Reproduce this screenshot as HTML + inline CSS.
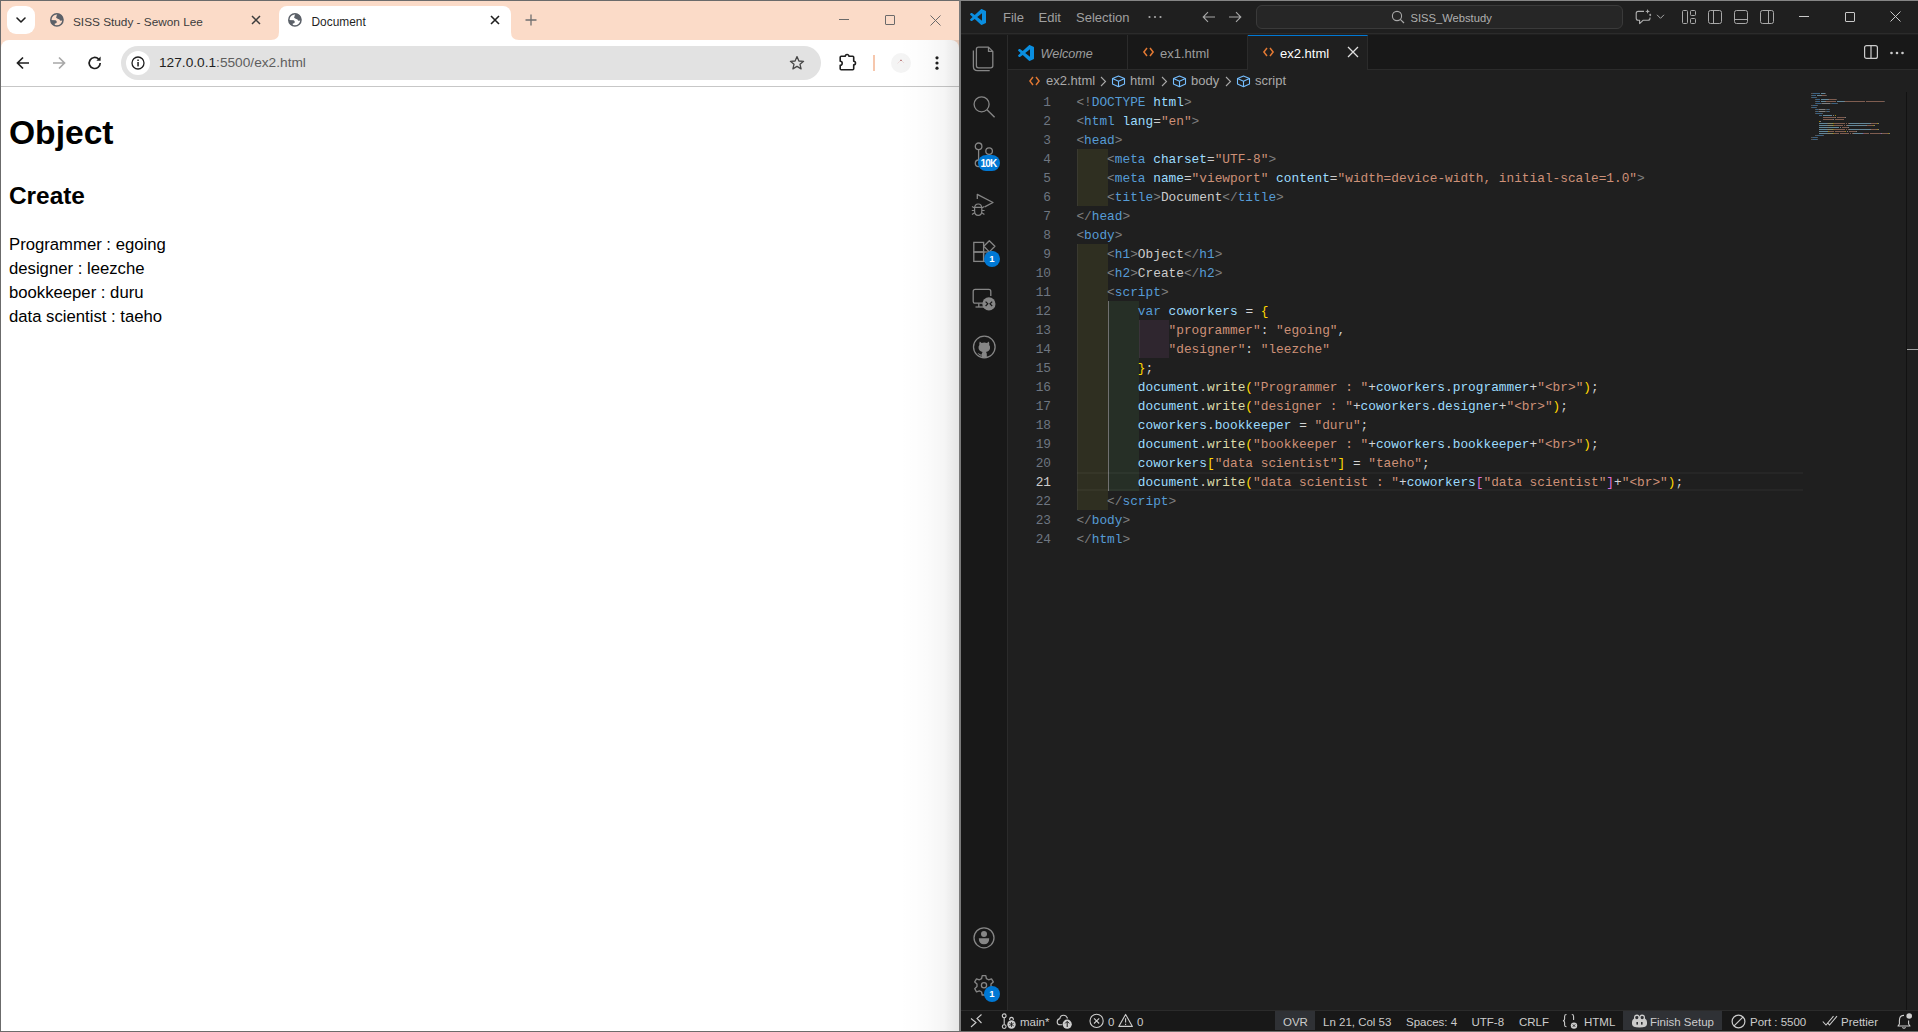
<!DOCTYPE html>
<html><head><meta charset="utf-8">
<style>
*{box-sizing:border-box;margin:0;padding:0}
html,body{width:1918px;height:1032px;overflow:hidden;background:#1f1f1f;font-family:"Liberation Sans",sans-serif}
.abs{position:absolute}
svg{position:absolute;overflow:visible}
/* ---------- browser ---------- */
#br{position:absolute;left:0;top:0;width:960px;height:1032px;background:#fff;overflow:hidden}
#frame{position:absolute;left:0;top:0;width:960px;height:48px;background:#fbdbc8}
.tabtxt{position:absolute;font-size:12px;color:#1f1f1f;white-space:nowrap;line-height:14px}
#toolbar{position:absolute;left:1px;top:40px;width:958px;height:47px;background:#fff;border-radius:8px 8px 0 0;border-bottom:1px solid #c7c7c7}
#omni{position:absolute;left:121px;top:46px;width:700px;height:34px;border-radius:17px;background:#e2e2e2}
#page{position:absolute;left:1px;top:87px;width:958px;height:944px;background:#fff}
.pg{position:absolute;white-space:nowrap;color:#000}
/* ---------- vscode ---------- */
#vs{position:absolute;left:960px;top:0;width:958px;height:1032px;background:#1f1f1f;overflow:hidden}
.ui{position:absolute;white-space:nowrap;color:#cccccc;font-size:13px;line-height:16px}
.code{position:absolute;left:116.4px;padding-top:1px;white-space:pre;font-family:"Liberation Mono",monospace;font-size:12.8167px;line-height:19px;height:19px;color:#cccccc}
.ln{position:absolute;left:41px;padding-top:1px;width:50px;text-align:right;font-family:"Liberation Mono",monospace;font-size:12.8167px;line-height:19px;color:#6e7681}
.p{color:#808080}.t{color:#569cd6}.a{color:#9cdcfe}.s{color:#ce9178}.x{color:#cccccc}
.v{color:#9cdcfe}.k{color:#569cd6}.f{color:#dcdcaa}.b1{color:#ffd700}.b2{color:#da70d6}.o{color:#d4d4d4}
.sb{position:absolute;top:1011px;font-size:12px;line-height:20px;color:#cccccc;white-space:nowrap}
</style></head><body>
<div id="br">
  <div id="frame"></div>
  <!-- window border -->
  <div class="abs" style="left:0;top:0;width:960px;height:1px;background:#6b6b6b;z-index:5"></div>
  <div class="abs" style="left:0;top:0;width:1px;height:1032px;background:#6b6b6b;z-index:5"></div>
  <div class="abs" style="left:959px;top:0;width:1px;height:1032px;background:#7a7a7a;z-index:5"></div>
  <div class="abs" style="left:0;top:1031px;width:960px;height:1px;background:#6b6b6b;z-index:5"></div>
  <!-- tab dropdown -->
  <div class="abs" style="left:7px;top:6px;width:28px;height:28px;border-radius:9px;background:#fff"></div>
  <svg style="left:0;top:0" width="40" height="40"><path d="M17 18 L21 22 L25 18" fill="none" stroke="#1f1f1f" stroke-width="1.6" stroke-linecap="round" stroke-linejoin="round"/></svg>
  <!-- inactive tab -->
  <svg style="left:47px;top:10px" width="20" height="20"><defs><clipPath id="gc1"><circle cx="9.9" cy="9.9" r="6.3"/></clipPath></defs><circle cx="9.9" cy="9.9" r="6.1" fill="none" stroke="#5b6068" stroke-width="1.5"/><g clip-path="url(#gc1)" fill="#5b6068"><path d="M11.2 3 Q9 5.4 9.1 7.8 Q10.6 9.2 12.5 9.4 Q13 10.6 13.6 10.8 L17 10.2 L17 3 Z"/><path d="M2.6 10.1 L8.6 10.2 Q9.9 10.8 9.8 12.2 Q9.3 13.3 7.8 13.6 L7.5 17 L2.6 17 Z"/></g></svg>
  <div class="tabtxt" style="left:73px;top:14.5px;color:#3c3c3c;font-size:11.8px">SISS Study - Sewon Lee</div>
  <svg style="left:250px;top:14px" width="12" height="12"><path d="M2 2 L10 10 M10 2 L2 10" stroke="#3c3c3c" stroke-width="1.5"/></svg>
  <!-- active tab -->
  <div class="abs" style="left:279px;top:6px;width:232px;height:35px;background:#fff;border-radius:8px 8px 0 0"></div>
  <svg style="left:271px;top:32px" width="8" height="9"><path d="M0 8 Q8 8 8 0 L8 9 L0 9 Z" fill="#fff"/></svg>
  <svg style="left:511px;top:32px" width="8" height="9"><path d="M8 8 Q0 8 0 0 L0 9 L8 9 Z" fill="#fff"/></svg>
  <svg style="left:285px;top:10px" width="20" height="20"><defs><clipPath id="gc2"><circle cx="9.9" cy="9.9" r="6.3"/></clipPath></defs><circle cx="9.9" cy="9.9" r="6.1" fill="none" stroke="#5b6068" stroke-width="1.5"/><g clip-path="url(#gc2)" fill="#5b6068"><path d="M11.2 3 Q9 5.4 9.1 7.8 Q10.6 9.2 12.5 9.4 Q13 10.6 13.6 10.8 L17 10.2 L17 3 Z"/><path d="M2.6 10.1 L8.6 10.2 Q9.9 10.8 9.8 12.2 Q9.3 13.3 7.8 13.6 L7.5 17 L2.6 17 Z"/></g></svg>
  <div class="tabtxt" style="left:311.5px;top:14.5px;color:#1f1f1f;font-size:11.9px">Document</div>
  <svg style="left:489px;top:14px" width="12" height="12"><path d="M2 2 L10 10 M10 2 L2 10" stroke="#1f1f1f" stroke-width="1.6"/></svg>
  <!-- new tab -->
  <svg style="left:524px;top:13px" width="14" height="14"><path d="M7 1.5 V12.5 M1.5 7 H12.5" stroke="#6f6f6f" stroke-width="1.3"/></svg>
  <!-- window controls -->
  <div class="abs" style="left:839px;top:19px;width:10px;height:1px;background:#6a6a6a"></div>
  <div class="abs" style="left:885px;top:15px;width:10px;height:10px;border:1px solid #6a6a6a;border-radius:1px"></div>
  <svg style="left:930px;top:15px" width="11" height="11"><path d="M0.5 0.5 L10.5 10.5 M10.5 0.5 L0.5 10.5" stroke="#6a6a6a" stroke-width="1"/></svg>
  <!-- toolbar -->
  <div id="toolbar"></div>
  <svg style="left:15px;top:55px" width="16" height="16"><path d="M14 8 H2.5 M8 2.5 L2.5 8 L8 13.5" fill="none" stroke="#1f1f1f" stroke-width="1.7"/></svg>
  <svg style="left:51px;top:55px" width="16" height="16"><path d="M2 8 H13.5 M8 2.5 L13.5 8 L8 13.5" fill="none" stroke="#a8a8a8" stroke-width="1.7"/></svg>
  <svg style="left:87px;top:55px" width="16" height="16"><path d="M13.2 8 A5.5 5.5 0 1 1 11.6 4.1" fill="none" stroke="#1f1f1f" stroke-width="1.7"/><path d="M13.6 1.6 V5.8 H9.4 Z" fill="#1f1f1f"/></svg>
  <div id="omni"></div>
  <div class="abs" style="left:126px;top:51px;width:24px;height:24px;border-radius:12px;background:#fff"></div>
  <svg style="left:131px;top:56px" width="14" height="14"><circle cx="7" cy="7" r="6" fill="none" stroke="#1f1f1f" stroke-width="1.3"/><rect x="6.3" y="6" width="1.5" height="4.4" fill="#1f1f1f"/><rect x="6.3" y="3.5" width="1.5" height="1.5" fill="#1f1f1f"/></svg>
  <div class="abs" style="left:159px;top:55px;font-size:13.7px;line-height:16px;white-space:nowrap"><span style="color:#1f1f1f">127.0.0.1</span><span style="color:#5e5e5e">:5500/ex2.html</span></div>
  <svg style="left:789px;top:55px" width="16" height="16"><path d="M8 1.6 L9.9 6 L14.6 6.3 L11 9.3 L12.1 13.9 L8 11.4 L3.9 13.9 L5 9.3 L1.4 6.3 L6.1 6 Z" fill="none" stroke="#474747" stroke-width="1.3" stroke-linejoin="round"/></svg>
  <svg style="left:838px;top:52px" width="20" height="20"><path d="M2.2 5.3 Q2.2 4.3 3.2 4.3 H7.3 A1.8 1.8 0 0 1 10.9 4.3 H14.7 Q15.7 4.3 15.7 5.3 V9.2 A1.8 1.8 0 0 1 15.7 12.8 V16.7 Q15.7 17.7 14.7 17.7 H3.2 Q2.2 17.7 2.2 16.7 V13.2 A2 2 0 0 0 2.2 9.2 Z" fill="none" stroke="#1f1f1f" stroke-width="1.6" stroke-linejoin="round"/></svg>
  <div class="abs" style="left:873px;top:55px;width:2px;height:16px;background:#f6c7ad"></div>
  <div class="abs" style="left:891px;top:53px;width:20px;height:20px;border-radius:10px;background:#f4f4f4"></div>
  <svg style="left:893px;top:55px" width="16" height="12"><path d="M4.5 8.5 L8 5 L11 8" fill="none" stroke="#e8d0d0" stroke-width="0.7"/><path d="M8 4.2 L8.8 6 H7.2 Z" fill="#a04848"/></svg>
  <svg style="left:933px;top:55px" width="8" height="16"><circle cx="4" cy="2.8" r="1.6" fill="#1f1f1f"/><circle cx="4" cy="8" r="1.6" fill="#1f1f1f"/><circle cx="4" cy="13.2" r="1.6" fill="#1f1f1f"/></svg>
  <!-- page -->
  <div id="page">
    <div class="pg" style="left:8px;top:26px;font-size:33.6px;font-weight:700;line-height:40px">Object</div>
    <div class="pg" style="left:8px;top:94px;font-size:24.4px;font-weight:700;line-height:30px">Create</div>
    <div class="pg" style="left:8px;top:145.5px;font-size:16.7px;line-height:24px">Programmer : egoing<br>designer : leezche<br>bookkeeper : duru<br>data scientist : taeho</div>
  </div>
  <div class="abs" style="left:900px;top:40px;width:59px;height:992px;background:linear-gradient(to right,rgba(0,0,0,0) 0%,rgba(0,0,0,0.015) 45%,rgba(0,0,0,0.04) 75%,rgba(0,0,0,0.1) 100%);z-index:4"></div>
</div>
<div id="vs">
  <!-- borders -->
  <div class="abs" style="left:0;top:0;width:1px;height:1032px;background:#7a7a7a;z-index:5"></div>
  <div class="abs" style="left:0;top:0;width:958px;height:1px;background:#858585;z-index:5"></div>
  <div class="abs" style="left:0;top:1031px;width:958px;height:1px;background:#6b6b6b;z-index:5"></div>
  <!-- title bar -->
  <div class="abs" style="left:1px;top:1px;width:957px;height:33px;background:#1f1f1f;border-bottom:1px solid #2b2b2b"></div>
  <svg style="left:10px;top:9px" width="16" height="16" viewBox="0 0 100 100"><path d="M96.5 10.8 L75.9 0.9 C73.5 -0.2 70.7 0.3 68.9 2.1 L29.5 38.1 L12.3 25.1 C10.7 23.9 8.5 24 7 25.3 L1.5 30.3 C-0.3 32 -0.3 34.8 1.5 36.5 L16.4 50 L1.5 63.5 C-0.3 65.2 -0.3 68 1.5 69.7 L7 74.7 C8.5 76 10.7 76.1 12.3 74.9 L29.5 61.9 L68.9 97.9 C70.7 99.7 73.5 100.2 75.9 99.1 L96.5 89.2 C98.7 88.2 100 86 100 83.6 V16.4 C100 14 98.7 11.8 96.5 10.8 Z M75 72.7 L45.1 50 L75 27.3 Z" fill="#0a8ee0"/></svg>
  <div class="ui" style="left:43px;top:9.5px;color:#a0a0a0">File</div>
  <div class="ui" style="left:78.5px;top:9.5px;color:#a0a0a0">Edit</div>
  <div class="ui" style="left:116px;top:9.5px;color:#a0a0a0">Selection</div>
  <svg style="left:187px;top:15px" width="16" height="4"><circle cx="2.5" cy="2" r="1.1" fill="#a8a8a8"/><circle cx="8" cy="2" r="1.1" fill="#a8a8a8"/><circle cx="13.5" cy="2" r="1.1" fill="#a8a8a8"/></svg>
  <svg style="left:241px;top:10px" width="16" height="14"><path d="M14 7 H2.5 M7 2.2 L2.2 7 L7 11.8" fill="none" stroke="#a8a8a8" stroke-width="1.1"/></svg>
  <svg style="left:267px;top:10px" width="16" height="14"><path d="M2 7 H13.5 M9 2.2 L13.8 7 L9 11.8" fill="none" stroke="#a8a8a8" stroke-width="1.1"/></svg>
  <div class="abs" style="left:296px;top:5px;width:367px;height:24px;border-radius:6px;background:#262626;border:1px solid #3a3a3a"></div>
  <svg style="left:431px;top:10px" width="14" height="14"><circle cx="6" cy="6" r="4.6" fill="none" stroke="#a8a8a8" stroke-width="1.1"/><path d="M9.3 9.3 L13 13" stroke="#a8a8a8" stroke-width="1.2"/></svg>
  <div class="ui" style="left:450.5px;top:9.5px;font-size:11.2px;color:#b0b0b0">SISS_Webstudy</div>
  <svg style="left:675px;top:9px" width="18" height="16"><path d="M9 2.4 H3.2 Q1.2 2.4 1.2 4.4 V9.3 Q1.2 11.3 3.2 11.3 H4.6 V14.6 L8 11.3 H13 Q15 11.3 15 9.3 V8.6" fill="none" stroke="#b0b0b0" stroke-width="1.1" stroke-linejoin="round"/><path d="M12.6 0 L13.3 1.7 L15 2.4 L13.3 3.1 L12.6 4.8 L11.9 3.1 L10.2 2.4 L11.9 1.7 Z" fill="#b0b0b0"/><path d="M15.2 4.5 L16.3 5.9 L15.2 7.3 L14.1 5.9 Z" fill="#b0b0b0"/></svg>
  <svg style="left:696px;top:14px" width="9" height="6"><path d="M1 0.8 L4.5 4.3 L8 0.8" fill="none" stroke="#a8a8a8" stroke-width="1"/></svg>
  <svg style="left:722px;top:10px" width="14" height="14"><rect x="0.5" y="0.5" width="5" height="13" rx="1" fill="none" stroke="#a8a8a8" stroke-width="1"/><rect x="8.5" y="0.5" width="5" height="5" rx="1" fill="none" stroke="#a8a8a8" stroke-width="1"/><rect x="8.5" y="8.5" width="5" height="5" rx="1" fill="none" stroke="#a8a8a8" stroke-width="1"/></svg>
  <svg style="left:748px;top:10px" width="14" height="14"><rect x="0.5" y="0.5" width="13" height="13" rx="2" fill="none" stroke="#a8a8a8" stroke-width="1"/><path d="M5.5 0.5 V13.5" stroke="#a8a8a8" stroke-width="1"/></svg>
  <svg style="left:774px;top:10px" width="14" height="14"><rect x="0.5" y="0.5" width="13" height="13" rx="2" fill="none" stroke="#a8a8a8" stroke-width="1"/><path d="M0.5 9.5 H13.5" stroke="#a8a8a8" stroke-width="1"/></svg>
  <svg style="left:800px;top:10px" width="14" height="14"><rect x="0.5" y="0.5" width="13" height="13" rx="2" fill="none" stroke="#a8a8a8" stroke-width="1"/><path d="M8.5 0.5 V13.5" stroke="#a8a8a8" stroke-width="1"/></svg>
  <div class="abs" style="left:839px;top:16px;width:10px;height:1px;background:#c8c8c8"></div>
  <div class="abs" style="left:885px;top:12px;width:10px;height:10px;border:1px solid #c8c8c8;border-radius:1px"></div>
  <svg style="left:930px;top:11px" width="11" height="11"><path d="M0.5 0.5 L10.5 10.5 M10.5 0.5 L0.5 10.5" stroke="#c8c8c8" stroke-width="1"/></svg>
  <!-- activity bar -->
  <div class="abs" style="left:1px;top:35px;width:47px;height:975px;background:#181818;border-right:1px solid #2b2b2b"></div>
  <!-- status bar -->
  <div class="abs" style="left:1px;top:1010px;width:957px;height:21px;background:#181818;border-top:1px solid #2b2b2b"></div>
  <!-- tabs bar -->
  <div class="abs" style="left:48px;top:35px;width:910px;height:35px;background:#181818;border-bottom:1px solid #2b2b2b"></div>
  <div class="abs" style="left:48px;top:35px;width:120px;height:34px;border-right:1px solid #2b2b2b"></div>
  <div class="abs" style="left:168px;top:35px;width:120px;height:34px;border-right:1px solid #2b2b2b"></div>
  <div class="abs" style="left:288px;top:35px;width:120px;height:35px;background:#1f1f1f;border-right:1px solid #2b2b2b;border-top:1px solid #0078d4"></div>
  <!-- editor area -->
  <div class="abs" style="left:48px;top:70px;width:910px;height:940px;background:#1f1f1f"></div>


  <!-- activity icons -->
  <svg style="left:12px;top:46px" width="24" height="26"><path d="M16.5 1.1 H6.5 Q4.4 1.1 4.4 3.2 V19.8 Q4.4 21.9 6.5 21.9 H18.6 Q20.8 21.9 20.8 19.8 V5.4 Z M16.5 1.1 V5.4 H20.8" fill="none" stroke="#868686" stroke-width="1.3" stroke-linejoin="round"/><path d="M1.4 4.5 V20.5 Q1.4 24.6 5.5 24.6 H17.7" fill="none" stroke="#868686" stroke-width="1.3"/></svg>
  <svg style="left:12px;top:94px" width="24" height="26"><circle cx="9.6" cy="10.3" r="7.5" fill="none" stroke="#868686" stroke-width="1.3"/><path d="M15 15.8 L22.6 23.2" stroke="#868686" stroke-width="1.4"/></svg>
  <svg style="left:12px;top:141px" width="24" height="26"><circle cx="6.6" cy="5.3" r="3.3" fill="none" stroke="#868686" stroke-width="1.3"/><circle cx="17.1" cy="10.1" r="3.3" fill="none" stroke="#868686" stroke-width="1.3"/><circle cx="6.6" cy="22.3" r="3.3" fill="none" stroke="#868686" stroke-width="1.3"/><path d="M6.6 8.6 V19" stroke="#868686" stroke-width="1.3"/><path d="M17.1 13.4 Q17.1 17 12 18.5 L8.8 19.6" fill="none" stroke="#868686" stroke-width="1.3"/></svg>
  <div class="abs" style="left:18px;top:155px;width:22px;height:16px;border-radius:8px;background:#0078d4;color:#fff;font-size:10px;font-weight:700;line-height:17px;text-align:center;letter-spacing:-0.7px;text-indent:-1px">10K</div>
  <svg style="left:10px;top:191px" width="26" height="26"><path d="M7.3 8 V3.3 L23 11.5 L14.7 15.8" fill="none" stroke="#868686" stroke-width="1.3" stroke-linejoin="round"/><path d="M4.6 17.5 Q4.6 13 8.2 13 Q11.8 13 11.8 17.5 V20 Q11.8 24.4 8.2 24.4 Q4.6 24.4 4.6 20 Z M4.6 16.4 H11.8 M2 15.5 L4.6 17 M14.4 15.5 L11.8 17 M1.8 19.5 H4.6 M14.6 19.5 H11.8 M2 23.5 L4.6 21.8 M14.4 23.5 L11.8 21.8" fill="none" stroke="#868686" stroke-width="1.2"/></svg>
  <svg style="left:12px;top:240px" width="24" height="24"><rect x="1.8" y="2.4" width="9.8" height="9.6" fill="none" stroke="#868686" stroke-width="1.3"/><rect x="1.8" y="12" width="9.8" height="9.4" fill="none" stroke="#868686" stroke-width="1.3"/><rect x="11.6" y="12" width="9.4" height="9.4" fill="none" stroke="#868686" stroke-width="1.3"/><path d="M17.3 0.8 L22.9 6.3 L17.3 11.9 L11.8 6.3 Z" fill="none" stroke="#868686" stroke-width="1.3" stroke-linejoin="round"/></svg>
  <div class="abs" style="left:24px;top:251px;width:16px;height:16px;border-radius:8px;background:#0078d4;color:#fff;font-size:9.5px;font-weight:700;line-height:16px;text-align:center">1</div>
  <svg style="left:12px;top:287px" width="26" height="26"><path d="M13 16.2 H3.2 Q1.2 16.2 1.2 14.2 V4.4 Q1.2 2.4 3.2 2.4 H16.8 Q18.8 2.4 18.8 4.4 V9" fill="none" stroke="#868686" stroke-width="1.3"/><path d="M3.5 20 H13" stroke="#868686" stroke-width="1.3"/><path d="M6.8 16.2 V20" stroke="#868686" stroke-width="1.3"/><circle cx="16.9" cy="16.9" r="6.6" fill="#868686"/><path d="M13.6 14.6 L15.8 16.8 L13.6 19 M20.2 14.6 L18 16.8 L20.2 19" fill="none" stroke="#181818" stroke-width="1.2"/></svg>
  <svg style="left:12px;top:335px" width="24" height="24"><circle cx="12.3" cy="12" r="10.8" fill="none" stroke="#868686" stroke-width="1.3"/><path d="M7.8 6.5 L9.6 8 Q12.3 7.2 15 8 L16.8 6.5 Q17.6 8.5 17.2 10 Q18.4 11.4 18 13.6 Q17.4 16.6 14 17 Q14.8 17.8 14.8 19 V22.8 H9.8 V20.6 Q7.6 21 6.8 19.6 Q6.4 18.4 5.4 18 Q6.6 17.6 7.4 18.8 Q8.4 20 9.8 19.4 V19 Q9.8 17.8 10.6 17 Q7.2 16.6 6.6 13.6 Q6.2 11.4 7.4 10 Q7 8.5 7.8 6.5 Z" fill="#868686"/></svg>
  <svg style="left:12px;top:926px" width="24" height="24"><circle cx="12" cy="11.8" r="10" fill="none" stroke="#868686" stroke-width="1.3"/><circle cx="12" cy="7.9" r="3" fill="#868686"/><path d="M6.8 12.2 H17.2 Q17.2 18.2 12 18.2 Q6.8 18.2 6.8 12.2 Z" fill="#868686"/></svg>
  <svg style="left:12px;top:974px" width="24" height="24"><path d="M10.2 1.6 H13.8 L14.4 4.6 L16.6 5.8 L19.5 4.8 L21.3 7.9 L19 10 V12.6 L21.3 14.7 L19.5 17.8 L16.6 16.8 L14.4 18 L13.8 21 H10.2 L9.6 18 L7.4 16.8 L4.5 17.8 L2.7 14.7 L5 12.6 V10 L2.7 7.9 L4.5 4.8 L7.4 5.8 L9.6 4.6 Z" fill="none" stroke="#868686" stroke-width="1.3" stroke-linejoin="round"/><circle cx="12" cy="11.3" r="2.6" fill="none" stroke="#868686" stroke-width="1.3"/></svg>
  <div class="abs" style="left:24px;top:986px;width:16px;height:16px;border-radius:8px;background:#0078d4;color:#fff;font-size:9.5px;font-weight:700;line-height:16px;text-align:center">1</div>

  <!-- status items -->
  <div class="abs" style="left:315px;top:1011px;width:40px;height:19px;background:#2f3135"></div>
  <div class="abs" style="left:663px;top:1011px;width:99px;height:19px;background:#2f3135"></div>
  <svg style="left:10px;top:1013px" width="13" height="16"><path d="M1 5.5 L6 9.5 L1 14 M11.5 1.5 L7 5.5 L11.5 10" fill="none" stroke="#cccccc" stroke-width="1.1"/></svg>
  <svg style="left:40px;top:1013px" width="18" height="17"><circle cx="4.2" cy="2.8" r="1.9" fill="none" stroke="#cccccc" stroke-width="1.1"/><circle cx="4.2" cy="13.6" r="1.9" fill="none" stroke="#cccccc" stroke-width="1.1"/><path d="M4.2 4.7 V11.7" stroke="#cccccc" stroke-width="1.1"/><path d="M9.6 7 Q9.6 4.4 11.5 4.4 Q13.4 4.4 13.4 7" fill="none" stroke="#cccccc" stroke-width="1.1"/><circle cx="11.5" cy="11.5" r="4.2" fill="#cccccc"/><path d="M11.5 9 V14 M9.3 10.2 L13.7 12.8 M13.7 10.2 L9.3 12.8" stroke="#181818" stroke-width="0.8"/></svg>
  <div class="sb" style="left:60.0px;top:1011.7px;font-size:11.5px;color:#cccccc">main*</div>
  <svg style="left:96px;top:1013px" width="18" height="17"><path d="M11.5 5.5 Q10.5 2.2 7.5 2.2 Q4.3 2.2 3.8 5.6 Q1.2 6.2 1.2 9 Q1.2 11.8 4.2 11.8 H6" fill="none" stroke="#cccccc" stroke-width="1.1"/><circle cx="11.2" cy="11.2" r="4.6" fill="#cccccc"/><path d="M11.2 14 V8.6 M9.2 10.4 L11.2 8.4 L13.2 10.4" fill="none" stroke="#181818" stroke-width="1"/></svg>
  <svg style="left:129px;top:1013px" width="16" height="16"><circle cx="7.6" cy="7.9" r="6.6" fill="none" stroke="#cccccc" stroke-width="1.1"/><path d="M5 5.3 L10.2 10.5 M10.2 5.3 L5 10.5" stroke="#cccccc" stroke-width="1.1"/></svg>
  <div class="sb" style="left:148.0px;top:1011.7px;font-size:11.5px;color:#cccccc">0</div>
  <svg style="left:158px;top:1013px" width="16" height="15"><path d="M7.6 1.4 L14.4 13.4 H0.8 Z" fill="none" stroke="#cccccc" stroke-width="1.1" stroke-linejoin="round"/><path d="M7.6 5.2 V9.6 M7.6 10.8 V12" stroke="#cccccc" stroke-width="1.1"/></svg>
  <div class="sb" style="left:177.0px;top:1011.7px;font-size:11.5px;color:#cccccc">0</div>
  <div class="sb" style="left:323.0px;top:1011.7px;font-size:11.5px;color:#cccccc">OVR</div>
  <div class="sb" style="left:363.0px;top:1011.7px;font-size:11.5px;color:#cccccc">Ln 21, Col 53</div>
  <div class="sb" style="left:446.0px;top:1011.7px;font-size:11.5px;color:#cccccc">Spaces: 4</div>
  <div class="sb" style="left:511.5px;top:1011.7px;font-size:11.5px;color:#cccccc">UTF-8</div>
  <div class="sb" style="left:559.0px;top:1011.7px;font-size:11.5px;color:#cccccc">CRLF</div>
  <svg style="left:602px;top:1013px" width="18" height="17"><path d="M4.5 1.5 Q2.6 1.5 2.6 3.4 V6 Q2.6 7.6 1 7.8 Q2.6 8 2.6 9.6 V12 Q2.6 13.8 4.5 13.8" fill="none" stroke="#cccccc" stroke-width="1.1"/><path d="M9.8 1.5 Q11.6 1.5 11.6 3.4 V7" fill="none" stroke="#cccccc" stroke-width="1.1"/><circle cx="12" cy="12.6" r="3.2" fill="#cccccc"/><path d="M10.8 11.4 L13.2 13.8 M13.2 11.4 L10.8 13.8" stroke="#181818" stroke-width="0.9"/></svg>
  <div class="sb" style="left:624.0px;top:1011.7px;font-size:11.5px;color:#cccccc">HTML</div>
  <svg style="left:671px;top:1013px" width="17" height="16"><path d="M3 4.5 Q3 1.5 6 1.5 Q8.5 1.5 8.5 4 Q8.5 1.5 11 1.5 Q14 1.5 14 4.5 V5.5 Q16 6.5 16 9 V11 Q16 14.5 8.5 14.5 Q1 14.5 1 11 V9 Q1 6.5 3 5.5 Z" fill="#cccccc"/><path d="M4.2 4.4 Q4.2 3 6 3 Q7.4 3 7.4 4.4 Q7.4 6.2 5.8 6.2 Q4.2 6.2 4.2 4.4 Z M9.6 4.4 Q9.6 3 11 3 Q12.8 3 12.8 4.4 Q12.8 6.2 11.2 6.2 Q9.6 6.2 9.6 4.4 Z" fill="#2f3135"/><rect x="5.4" y="9" width="1.6" height="2.6" fill="#2f3135"/><rect x="10" y="9" width="1.6" height="2.6" fill="#2f3135"/></svg>
  <div class="sb" style="left:690.0px;top:1011.7px;font-size:11.5px;color:#cccccc">Finish Setup</div>
  <svg style="left:771px;top:1014px" width="15" height="15"><circle cx="7.5" cy="7.5" r="6.4" fill="none" stroke="#cccccc" stroke-width="1.2"/><path d="M3.1 11.9 L11.9 3.1" stroke="#cccccc" stroke-width="1.2"/></svg>
  <div class="sb" style="left:790.0px;top:1011.7px;font-size:11.5px;color:#cccccc">Port : 5500</div>
  <svg style="left:862px;top:1014px" width="16" height="14"><path d="M0.8 7.5 L4 11 L11.5 2.2 M5.8 9.2 L7.5 11 L15 2.2" fill="none" stroke="#cccccc" stroke-width="1.1"/></svg>
  <div class="sb" style="left:881.0px;top:1011.7px;font-size:11.5px;color:#cccccc">Prettier</div>
  <svg style="left:936px;top:1012px" width="18" height="18"><path d="M8 3.4 Q3.4 3.4 3.4 8.6 V12 L2 14 H14 L12.6 12 V8.6" fill="none" stroke="#cccccc" stroke-width="1.1" stroke-linejoin="round"/><path d="M6.4 15.4 Q8 17 9.6 15.4" fill="none" stroke="#cccccc" stroke-width="1.1"/><circle cx="13.2" cy="4" r="2.8" fill="#cccccc"/></svg>
  <!-- minimap -->
  <div class="abs" style="left:851px;top:92px;width:90px;height:50px;opacity:0.55">
<i style="position:absolute;left:0px;top:0.5px;width:2px;height:1.2px;background:#808080"></i>
<i style="position:absolute;left:2px;top:0.5px;width:7px;height:1.2px;background:#569cd6"></i>
<i style="position:absolute;left:10px;top:0.5px;width:4px;height:1.2px;background:#9cdcfe"></i>
<i style="position:absolute;left:14px;top:0.5px;width:1px;height:1.2px;background:#808080"></i>
<i style="position:absolute;left:0px;top:2.5px;width:1px;height:1.2px;background:#808080"></i>
<i style="position:absolute;left:1px;top:2.5px;width:4px;height:1.2px;background:#569cd6"></i>
<i style="position:absolute;left:6px;top:2.5px;width:4px;height:1.2px;background:#9cdcfe"></i>
<i style="position:absolute;left:10px;top:2.5px;width:1px;height:1.2px;background:#cccccc"></i>
<i style="position:absolute;left:11px;top:2.5px;width:4px;height:1.2px;background:#ce9178"></i>
<i style="position:absolute;left:15px;top:2.5px;width:1px;height:1.2px;background:#808080"></i>
<i style="position:absolute;left:0px;top:4.5px;width:1px;height:1.2px;background:#808080"></i>
<i style="position:absolute;left:1px;top:4.5px;width:4px;height:1.2px;background:#569cd6"></i>
<i style="position:absolute;left:5px;top:4.5px;width:1px;height:1.2px;background:#808080"></i>
<i style="position:absolute;left:4px;top:6.5px;width:1px;height:1.2px;background:#808080"></i>
<i style="position:absolute;left:5px;top:6.5px;width:4px;height:1.2px;background:#569cd6"></i>
<i style="position:absolute;left:10px;top:6.5px;width:7px;height:1.2px;background:#9cdcfe"></i>
<i style="position:absolute;left:17px;top:6.5px;width:1px;height:1.2px;background:#cccccc"></i>
<i style="position:absolute;left:18px;top:6.5px;width:7px;height:1.2px;background:#ce9178"></i>
<i style="position:absolute;left:25px;top:6.5px;width:1px;height:1.2px;background:#808080"></i>
<i style="position:absolute;left:4px;top:8.5px;width:1px;height:1.2px;background:#808080"></i>
<i style="position:absolute;left:5px;top:8.5px;width:4px;height:1.2px;background:#569cd6"></i>
<i style="position:absolute;left:10px;top:8.5px;width:4px;height:1.2px;background:#9cdcfe"></i>
<i style="position:absolute;left:14px;top:8.5px;width:1px;height:1.2px;background:#cccccc"></i>
<i style="position:absolute;left:15px;top:8.5px;width:10px;height:1.2px;background:#ce9178"></i>
<i style="position:absolute;left:26px;top:8.5px;width:7px;height:1.2px;background:#9cdcfe"></i>
<i style="position:absolute;left:33px;top:8.5px;width:1px;height:1.2px;background:#cccccc"></i>
<i style="position:absolute;left:34px;top:8.5px;width:20px;height:1.2px;background:#ce9178"></i>
<i style="position:absolute;left:55px;top:8.5px;width:18px;height:1.2px;background:#ce9178"></i>
<i style="position:absolute;left:73px;top:8.5px;width:1px;height:1.2px;background:#808080"></i>
<i style="position:absolute;left:4px;top:10.5px;width:1px;height:1.2px;background:#808080"></i>
<i style="position:absolute;left:5px;top:10.5px;width:5px;height:1.2px;background:#569cd6"></i>
<i style="position:absolute;left:10px;top:10.5px;width:1px;height:1.2px;background:#808080"></i>
<i style="position:absolute;left:11px;top:10.5px;width:8px;height:1.2px;background:#cccccc"></i>
<i style="position:absolute;left:19px;top:10.5px;width:2px;height:1.2px;background:#808080"></i>
<i style="position:absolute;left:21px;top:10.5px;width:5px;height:1.2px;background:#569cd6"></i>
<i style="position:absolute;left:26px;top:10.5px;width:1px;height:1.2px;background:#808080"></i>
<i style="position:absolute;left:0px;top:12.5px;width:2px;height:1.2px;background:#808080"></i>
<i style="position:absolute;left:2px;top:12.5px;width:4px;height:1.2px;background:#569cd6"></i>
<i style="position:absolute;left:6px;top:12.5px;width:1px;height:1.2px;background:#808080"></i>
<i style="position:absolute;left:0px;top:14.5px;width:1px;height:1.2px;background:#808080"></i>
<i style="position:absolute;left:1px;top:14.5px;width:4px;height:1.2px;background:#569cd6"></i>
<i style="position:absolute;left:5px;top:14.5px;width:1px;height:1.2px;background:#808080"></i>
<i style="position:absolute;left:4px;top:16.5px;width:1px;height:1.2px;background:#808080"></i>
<i style="position:absolute;left:5px;top:16.5px;width:2px;height:1.2px;background:#569cd6"></i>
<i style="position:absolute;left:7px;top:16.5px;width:1px;height:1.2px;background:#808080"></i>
<i style="position:absolute;left:8px;top:16.5px;width:6px;height:1.2px;background:#cccccc"></i>
<i style="position:absolute;left:14px;top:16.5px;width:2px;height:1.2px;background:#808080"></i>
<i style="position:absolute;left:16px;top:16.5px;width:2px;height:1.2px;background:#569cd6"></i>
<i style="position:absolute;left:18px;top:16.5px;width:1px;height:1.2px;background:#808080"></i>
<i style="position:absolute;left:4px;top:18.5px;width:1px;height:1.2px;background:#808080"></i>
<i style="position:absolute;left:5px;top:18.5px;width:2px;height:1.2px;background:#569cd6"></i>
<i style="position:absolute;left:7px;top:18.5px;width:1px;height:1.2px;background:#808080"></i>
<i style="position:absolute;left:8px;top:18.5px;width:6px;height:1.2px;background:#cccccc"></i>
<i style="position:absolute;left:14px;top:18.5px;width:2px;height:1.2px;background:#808080"></i>
<i style="position:absolute;left:16px;top:18.5px;width:2px;height:1.2px;background:#569cd6"></i>
<i style="position:absolute;left:18px;top:18.5px;width:1px;height:1.2px;background:#808080"></i>
<i style="position:absolute;left:4px;top:20.5px;width:1px;height:1.2px;background:#808080"></i>
<i style="position:absolute;left:5px;top:20.5px;width:6px;height:1.2px;background:#569cd6"></i>
<i style="position:absolute;left:11px;top:20.5px;width:1px;height:1.2px;background:#808080"></i>
<i style="position:absolute;left:8px;top:22.5px;width:3px;height:1.2px;background:#569cd6"></i>
<i style="position:absolute;left:12px;top:22.5px;width:9px;height:1.2px;background:#9cdcfe"></i>
<i style="position:absolute;left:22px;top:22.5px;width:1px;height:1.2px;background:#d4d4d4"></i>
<i style="position:absolute;left:24px;top:22.5px;width:1px;height:1.2px;background:#ffd700"></i>
<i style="position:absolute;left:12px;top:24.5px;width:12px;height:1.2px;background:#ce9178"></i>
<i style="position:absolute;left:24px;top:24.5px;width:1px;height:1.2px;background:#cccccc"></i>
<i style="position:absolute;left:26px;top:24.5px;width:8px;height:1.2px;background:#ce9178"></i>
<i style="position:absolute;left:34px;top:24.5px;width:1px;height:1.2px;background:#cccccc"></i>
<i style="position:absolute;left:12px;top:26.5px;width:10px;height:1.2px;background:#ce9178"></i>
<i style="position:absolute;left:22px;top:26.5px;width:1px;height:1.2px;background:#cccccc"></i>
<i style="position:absolute;left:24px;top:26.5px;width:9px;height:1.2px;background:#ce9178"></i>
<i style="position:absolute;left:8px;top:28.5px;width:1px;height:1.2px;background:#ffd700"></i>
<i style="position:absolute;left:9px;top:28.5px;width:1px;height:1.2px;background:#cccccc"></i>
<i style="position:absolute;left:8px;top:30.5px;width:8px;height:1.2px;background:#9cdcfe"></i>
<i style="position:absolute;left:16px;top:30.5px;width:1px;height:1.2px;background:#cccccc"></i>
<i style="position:absolute;left:17px;top:30.5px;width:5px;height:1.2px;background:#dcdcaa"></i>
<i style="position:absolute;left:22px;top:30.5px;width:1px;height:1.2px;background:#ffd700"></i>
<i style="position:absolute;left:23px;top:30.5px;width:11px;height:1.2px;background:#ce9178"></i>
<i style="position:absolute;left:35px;top:30.5px;width:1px;height:1.2px;background:#ce9178"></i>
<i style="position:absolute;left:37px;top:30.5px;width:1px;height:1.2px;background:#ce9178"></i>
<i style="position:absolute;left:38px;top:30.5px;width:1px;height:1.2px;background:#d4d4d4"></i>
<i style="position:absolute;left:39px;top:30.5px;width:9px;height:1.2px;background:#9cdcfe"></i>
<i style="position:absolute;left:48px;top:30.5px;width:1px;height:1.2px;background:#cccccc"></i>
<i style="position:absolute;left:49px;top:30.5px;width:10px;height:1.2px;background:#9cdcfe"></i>
<i style="position:absolute;left:59px;top:30.5px;width:1px;height:1.2px;background:#d4d4d4"></i>
<i style="position:absolute;left:60px;top:30.5px;width:6px;height:1.2px;background:#ce9178"></i>
<i style="position:absolute;left:66px;top:30.5px;width:1px;height:1.2px;background:#ffd700"></i>
<i style="position:absolute;left:67px;top:30.5px;width:1px;height:1.2px;background:#cccccc"></i>
<i style="position:absolute;left:8px;top:32.5px;width:8px;height:1.2px;background:#9cdcfe"></i>
<i style="position:absolute;left:16px;top:32.5px;width:1px;height:1.2px;background:#cccccc"></i>
<i style="position:absolute;left:17px;top:32.5px;width:5px;height:1.2px;background:#dcdcaa"></i>
<i style="position:absolute;left:22px;top:32.5px;width:1px;height:1.2px;background:#ffd700"></i>
<i style="position:absolute;left:23px;top:32.5px;width:9px;height:1.2px;background:#ce9178"></i>
<i style="position:absolute;left:33px;top:32.5px;width:1px;height:1.2px;background:#ce9178"></i>
<i style="position:absolute;left:35px;top:32.5px;width:1px;height:1.2px;background:#ce9178"></i>
<i style="position:absolute;left:36px;top:32.5px;width:1px;height:1.2px;background:#d4d4d4"></i>
<i style="position:absolute;left:37px;top:32.5px;width:9px;height:1.2px;background:#9cdcfe"></i>
<i style="position:absolute;left:46px;top:32.5px;width:1px;height:1.2px;background:#cccccc"></i>
<i style="position:absolute;left:47px;top:32.5px;width:8px;height:1.2px;background:#9cdcfe"></i>
<i style="position:absolute;left:55px;top:32.5px;width:1px;height:1.2px;background:#d4d4d4"></i>
<i style="position:absolute;left:56px;top:32.5px;width:6px;height:1.2px;background:#ce9178"></i>
<i style="position:absolute;left:62px;top:32.5px;width:1px;height:1.2px;background:#ffd700"></i>
<i style="position:absolute;left:63px;top:32.5px;width:1px;height:1.2px;background:#cccccc"></i>
<i style="position:absolute;left:8px;top:34.5px;width:9px;height:1.2px;background:#9cdcfe"></i>
<i style="position:absolute;left:17px;top:34.5px;width:1px;height:1.2px;background:#cccccc"></i>
<i style="position:absolute;left:18px;top:34.5px;width:10px;height:1.2px;background:#9cdcfe"></i>
<i style="position:absolute;left:29px;top:34.5px;width:1px;height:1.2px;background:#d4d4d4"></i>
<i style="position:absolute;left:31px;top:34.5px;width:6px;height:1.2px;background:#ce9178"></i>
<i style="position:absolute;left:37px;top:34.5px;width:1px;height:1.2px;background:#cccccc"></i>
<i style="position:absolute;left:8px;top:36.5px;width:8px;height:1.2px;background:#9cdcfe"></i>
<i style="position:absolute;left:16px;top:36.5px;width:1px;height:1.2px;background:#cccccc"></i>
<i style="position:absolute;left:17px;top:36.5px;width:5px;height:1.2px;background:#dcdcaa"></i>
<i style="position:absolute;left:22px;top:36.5px;width:1px;height:1.2px;background:#ffd700"></i>
<i style="position:absolute;left:23px;top:36.5px;width:11px;height:1.2px;background:#ce9178"></i>
<i style="position:absolute;left:35px;top:36.5px;width:1px;height:1.2px;background:#ce9178"></i>
<i style="position:absolute;left:37px;top:36.5px;width:1px;height:1.2px;background:#ce9178"></i>
<i style="position:absolute;left:38px;top:36.5px;width:1px;height:1.2px;background:#d4d4d4"></i>
<i style="position:absolute;left:39px;top:36.5px;width:9px;height:1.2px;background:#9cdcfe"></i>
<i style="position:absolute;left:48px;top:36.5px;width:1px;height:1.2px;background:#cccccc"></i>
<i style="position:absolute;left:49px;top:36.5px;width:10px;height:1.2px;background:#9cdcfe"></i>
<i style="position:absolute;left:59px;top:36.5px;width:1px;height:1.2px;background:#d4d4d4"></i>
<i style="position:absolute;left:60px;top:36.5px;width:6px;height:1.2px;background:#ce9178"></i>
<i style="position:absolute;left:66px;top:36.5px;width:1px;height:1.2px;background:#ffd700"></i>
<i style="position:absolute;left:67px;top:36.5px;width:1px;height:1.2px;background:#cccccc"></i>
<i style="position:absolute;left:8px;top:38.5px;width:9px;height:1.2px;background:#9cdcfe"></i>
<i style="position:absolute;left:17px;top:38.5px;width:1px;height:1.2px;background:#ffd700"></i>
<i style="position:absolute;left:18px;top:38.5px;width:5px;height:1.2px;background:#ce9178"></i>
<i style="position:absolute;left:24px;top:38.5px;width:10px;height:1.2px;background:#ce9178"></i>
<i style="position:absolute;left:34px;top:38.5px;width:1px;height:1.2px;background:#ffd700"></i>
<i style="position:absolute;left:36px;top:38.5px;width:1px;height:1.2px;background:#d4d4d4"></i>
<i style="position:absolute;left:38px;top:38.5px;width:7px;height:1.2px;background:#ce9178"></i>
<i style="position:absolute;left:45px;top:38.5px;width:1px;height:1.2px;background:#cccccc"></i>
<i style="position:absolute;left:8px;top:40.5px;width:8px;height:1.2px;background:#9cdcfe"></i>
<i style="position:absolute;left:16px;top:40.5px;width:1px;height:1.2px;background:#cccccc"></i>
<i style="position:absolute;left:17px;top:40.5px;width:5px;height:1.2px;background:#dcdcaa"></i>
<i style="position:absolute;left:22px;top:40.5px;width:1px;height:1.2px;background:#ffd700"></i>
<i style="position:absolute;left:23px;top:40.5px;width:5px;height:1.2px;background:#ce9178"></i>
<i style="position:absolute;left:29px;top:40.5px;width:9px;height:1.2px;background:#ce9178"></i>
<i style="position:absolute;left:39px;top:40.5px;width:1px;height:1.2px;background:#ce9178"></i>
<i style="position:absolute;left:41px;top:40.5px;width:1px;height:1.2px;background:#ce9178"></i>
<i style="position:absolute;left:42px;top:40.5px;width:1px;height:1.2px;background:#d4d4d4"></i>
<i style="position:absolute;left:43px;top:40.5px;width:9px;height:1.2px;background:#9cdcfe"></i>
<i style="position:absolute;left:52px;top:40.5px;width:1px;height:1.2px;background:#da70d6"></i>
<i style="position:absolute;left:53px;top:40.5px;width:5px;height:1.2px;background:#ce9178"></i>
<i style="position:absolute;left:59px;top:40.5px;width:10px;height:1.2px;background:#ce9178"></i>
<i style="position:absolute;left:69px;top:40.5px;width:1px;height:1.2px;background:#da70d6"></i>
<i style="position:absolute;left:70px;top:40.5px;width:1px;height:1.2px;background:#d4d4d4"></i>
<i style="position:absolute;left:71px;top:40.5px;width:6px;height:1.2px;background:#ce9178"></i>
<i style="position:absolute;left:77px;top:40.5px;width:1px;height:1.2px;background:#ffd700"></i>
<i style="position:absolute;left:78px;top:40.5px;width:1px;height:1.2px;background:#cccccc"></i>
<i style="position:absolute;left:4px;top:42.5px;width:2px;height:1.2px;background:#808080"></i>
<i style="position:absolute;left:6px;top:42.5px;width:6px;height:1.2px;background:#569cd6"></i>
<i style="position:absolute;left:12px;top:42.5px;width:1px;height:1.2px;background:#808080"></i>
<i style="position:absolute;left:0px;top:44.5px;width:2px;height:1.2px;background:#808080"></i>
<i style="position:absolute;left:2px;top:44.5px;width:4px;height:1.2px;background:#569cd6"></i>
<i style="position:absolute;left:6px;top:44.5px;width:1px;height:1.2px;background:#808080"></i>
<i style="position:absolute;left:0px;top:46.5px;width:2px;height:1.2px;background:#808080"></i>
<i style="position:absolute;left:2px;top:46.5px;width:4px;height:1.2px;background:#569cd6"></i>
<i style="position:absolute;left:6px;top:46.5px;width:1px;height:1.2px;background:#808080"></i>
  </div>
  <!-- overview ruler / scrollbar -->
  <div class="abs" style="left:946px;top:92px;width:1px;height:918px;background:#121212"></div>
  <div class="abs" style="left:947px;top:348.5px;width:11px;height:1.2px;background:#a0a0a0"></div>
  <!-- tab content -->
  <svg style="left:58px;top:45px" width="16" height="16" viewBox="0 0 100 100"><path d="M96.5 10.8 L75.9 0.9 C73.5 -0.2 70.7 0.3 68.9 2.1 L29.5 38.1 L12.3 25.1 C10.7 23.9 8.5 24 7 25.3 L1.5 30.3 C-0.3 32 -0.3 34.8 1.5 36.5 L16.4 50 L1.5 63.5 C-0.3 65.2 -0.3 68 1.5 69.7 L7 74.7 C8.5 76 10.7 76.1 12.3 74.9 L29.5 61.9 L68.9 97.9 C70.7 99.7 73.5 100.2 75.9 99.1 L96.5 89.2 C98.7 88.2 100 86 100 83.6 V16.4 C100 14 98.7 11.8 96.5 10.8 Z M75 72.7 L45.1 50 L75 27.3 Z" fill="#0a8ee0"/></svg>
  <div class="ui" style="left:80.5px;top:45.5px;font-style:italic;color:#9d9d9d;font-size:12.6px">Welcome</div>
  <svg style="left:183px;top:47px" width="11" height="10"><path d="M4 1 L0.9 5 L4 9 M7 1 L10.1 5 L7 9" fill="none" stroke="#e37933" stroke-width="1.5"/></svg>
  <div class="ui" style="left:200px;top:45.5px;color:#9d9d9d">ex1.html</div>
  <svg style="left:303px;top:47px" width="11" height="10"><path d="M4 1 L0.9 5 L4 9 M7 1 L10.1 5 L7 9" fill="none" stroke="#e37933" stroke-width="1.5"/></svg>
  <div class="ui" style="left:320px;top:45.5px;color:#ffffff">ex2.html</div>
  <svg style="left:387px;top:46px" width="12" height="12"><path d="M1 1 L11 11 M11 1 L1 11" stroke="#e0e0e0" stroke-width="1.3"/></svg>
  <svg style="left:904px;top:45px" width="14" height="14"><rect x="0.6" y="0.6" width="12.8" height="12.8" rx="2" fill="none" stroke="#cccccc" stroke-width="1.2"/><path d="M7 0.6 V13.4" stroke="#cccccc" stroke-width="1.2"/></svg>
  <svg style="left:929px;top:51px" width="16" height="4"><circle cx="2.5" cy="2" r="1.3" fill="#cccccc"/><circle cx="8" cy="2" r="1.3" fill="#cccccc"/><circle cx="13.5" cy="2" r="1.3" fill="#cccccc"/></svg>
  <!-- breadcrumbs -->
  <svg style="left:69px;top:76px" width="11" height="10"><path d="M4 1 L0.9 5 L4 9 M7 1 L10.1 5 L7 9" fill="none" stroke="#e37933" stroke-width="1.4"/></svg>
  <div class="ui" style="left:86px;top:73px;color:#a9a9a9">ex2.html</div>
  <svg style="left:140px;top:76px" width="7" height="11"><path d="M1 1 L5.5 5.5 L1 10" fill="none" stroke="#a9a9a9" stroke-width="1.1"/></svg>
  <svg style="left:151px;top:75px" width="15" height="13"><path d="M7.5 1 L13.5 3.5 V9 L7.5 11.8 L1.5 9 V3.5 Z M1.5 3.5 L7.5 6.2 L13.5 3.5 M7.5 6.2 V11.8" fill="none" stroke="#75beff" stroke-width="1.1" stroke-linejoin="round"/></svg>
  <div class="ui" style="left:170px;top:73px;color:#a9a9a9">html</div>
  <svg style="left:201px;top:76px" width="7" height="11"><path d="M1 1 L5.5 5.5 L1 10" fill="none" stroke="#a9a9a9" stroke-width="1.1"/></svg>
  <svg style="left:212px;top:75px" width="15" height="13"><path d="M7.5 1 L13.5 3.5 V9 L7.5 11.8 L1.5 9 V3.5 Z M1.5 3.5 L7.5 6.2 L13.5 3.5 M7.5 6.2 V11.8" fill="none" stroke="#75beff" stroke-width="1.1" stroke-linejoin="round"/></svg>
  <div class="ui" style="left:231px;top:73px;color:#a9a9a9">body</div>
  <svg style="left:265px;top:76px" width="7" height="11"><path d="M1 1 L5.5 5.5 L1 10" fill="none" stroke="#a9a9a9" stroke-width="1.1"/></svg>
  <svg style="left:276px;top:75px" width="15" height="13"><path d="M7.5 1 L13.5 3.5 V9 L7.5 11.8 L1.5 9 V3.5 Z M1.5 3.5 L7.5 6.2 L13.5 3.5 M7.5 6.2 V11.8" fill="none" stroke="#75beff" stroke-width="1.1" stroke-linejoin="round"/></svg>
  <div class="ui" style="left:295px;top:73px;color:#a9a9a9">script</div>
  <!-- editor -->
  <div class="abs" style="left:117.00px;top:149px;width:30.77px;height:57px;background:#2f2f21"></div>
  <div class="abs" style="left:117.00px;top:244px;width:30.77px;height:266px;background:#2f2f21"></div>
  <div class="abs" style="left:147.77px;top:301px;width:30.77px;height:190px;background:#262f26"></div>
  <div class="abs" style="left:178.54px;top:320px;width:30.77px;height:38px;background:#2f262f"></div>
  <div class="abs" style="left:117px;top:149px;width:1px;height:57px;background:#3a3a30"></div>
  <div class="abs" style="left:117px;top:244px;width:1px;height:266px;background:#3a3a30"></div>
  <div class="abs" style="left:148px;top:301px;width:1px;height:190px;background:#707070"></div>
  <div class="abs" style="left:179px;top:320px;width:1px;height:38px;background:#3a333a"></div>
  <div class="abs" style="left:117px;top:472px;width:726px;height:19px;border-top:2px solid rgba(255,255,255,0.035);border-bottom:2px solid rgba(255,255,255,0.035)"></div>
  <div class="ln" style="top:92px;color:#6e7681">1</div>
  <div class="code" style="top:92px"><span class="p">&lt;!</span><span class="t">DOCTYPE</span> <span class="a">html</span><span class="p">&gt;</span></div>
  <div class="ln" style="top:111px;color:#6e7681">2</div>
  <div class="code" style="top:111px"><span class="p">&lt;</span><span class="t">html</span> <span class="a">lang</span><span class="x">=</span><span class="s">"en"</span><span class="p">&gt;</span></div>
  <div class="ln" style="top:130px;color:#6e7681">3</div>
  <div class="code" style="top:130px"><span class="p">&lt;</span><span class="t">head</span><span class="p">&gt;</span></div>
  <div class="ln" style="top:149px;color:#6e7681">4</div>
  <div class="code" style="top:149px">    <span class="p">&lt;</span><span class="t">meta</span> <span class="a">charset</span><span class="x">=</span><span class="s">"UTF-8"</span><span class="p">&gt;</span></div>
  <div class="ln" style="top:168px;color:#6e7681">5</div>
  <div class="code" style="top:168px">    <span class="p">&lt;</span><span class="t">meta</span> <span class="a">name</span><span class="x">=</span><span class="s">"viewport"</span> <span class="a">content</span><span class="x">=</span><span class="s">"width=device-width, initial-scale=1.0"</span><span class="p">&gt;</span></div>
  <div class="ln" style="top:187px;color:#6e7681">6</div>
  <div class="code" style="top:187px">    <span class="p">&lt;</span><span class="t">title</span><span class="p">&gt;</span><span class="x">Document</span><span class="p">&lt;/</span><span class="t">title</span><span class="p">&gt;</span></div>
  <div class="ln" style="top:206px;color:#6e7681">7</div>
  <div class="code" style="top:206px"><span class="p">&lt;/</span><span class="t">head</span><span class="p">&gt;</span></div>
  <div class="ln" style="top:225px;color:#6e7681">8</div>
  <div class="code" style="top:225px"><span class="p">&lt;</span><span class="t">body</span><span class="p">&gt;</span></div>
  <div class="ln" style="top:244px;color:#6e7681">9</div>
  <div class="code" style="top:244px">    <span class="p">&lt;</span><span class="t">h1</span><span class="p">&gt;</span><span class="x">Object</span><span class="p">&lt;/</span><span class="t">h1</span><span class="p">&gt;</span></div>
  <div class="ln" style="top:263px;color:#6e7681">10</div>
  <div class="code" style="top:263px">    <span class="p">&lt;</span><span class="t">h2</span><span class="p">&gt;</span><span class="x">Create</span><span class="p">&lt;/</span><span class="t">h2</span><span class="p">&gt;</span></div>
  <div class="ln" style="top:282px;color:#6e7681">11</div>
  <div class="code" style="top:282px">    <span class="p">&lt;</span><span class="t">script</span><span class="p">&gt;</span></div>
  <div class="ln" style="top:301px;color:#6e7681">12</div>
  <div class="code" style="top:301px">        <span class="k">var</span> <span class="v">coworkers</span> <span class="o">=</span> <span class="b1">{</span></div>
  <div class="ln" style="top:320px;color:#6e7681">13</div>
  <div class="code" style="top:320px">            <span class="s">"programmer"</span><span class="x">: </span><span class="s">"egoing"</span><span class="x">,</span></div>
  <div class="ln" style="top:339px;color:#6e7681">14</div>
  <div class="code" style="top:339px">            <span class="s">"designer"</span><span class="x">: </span><span class="s">"leezche"</span></div>
  <div class="ln" style="top:358px;color:#6e7681">15</div>
  <div class="code" style="top:358px">        <span class="b1">}</span><span class="x">;</span></div>
  <div class="ln" style="top:377px;color:#6e7681">16</div>
  <div class="code" style="top:377px">        <span class="v">document</span><span class="x">.</span><span class="f">write</span><span class="b1">(</span><span class="s">"Programmer : "</span><span class="o">+</span><span class="v">coworkers</span><span class="x">.</span><span class="v">programmer</span><span class="o">+</span><span class="s">"&lt;br&gt;"</span><span class="b1">)</span><span class="x">;</span></div>
  <div class="ln" style="top:396px;color:#6e7681">17</div>
  <div class="code" style="top:396px">        <span class="v">document</span><span class="x">.</span><span class="f">write</span><span class="b1">(</span><span class="s">"designer : "</span><span class="o">+</span><span class="v">coworkers</span><span class="x">.</span><span class="v">designer</span><span class="o">+</span><span class="s">"&lt;br&gt;"</span><span class="b1">)</span><span class="x">;</span></div>
  <div class="ln" style="top:415px;color:#6e7681">18</div>
  <div class="code" style="top:415px">        <span class="v">coworkers</span><span class="x">.</span><span class="v">bookkeeper</span> <span class="o">=</span> <span class="s">"duru"</span><span class="x">;</span></div>
  <div class="ln" style="top:434px;color:#6e7681">19</div>
  <div class="code" style="top:434px">        <span class="v">document</span><span class="x">.</span><span class="f">write</span><span class="b1">(</span><span class="s">"bookkeeper : "</span><span class="o">+</span><span class="v">coworkers</span><span class="x">.</span><span class="v">bookkeeper</span><span class="o">+</span><span class="s">"&lt;br&gt;"</span><span class="b1">)</span><span class="x">;</span></div>
  <div class="ln" style="top:453px;color:#6e7681">20</div>
  <div class="code" style="top:453px">        <span class="v">coworkers</span><span class="b1">[</span><span class="s">"data scientist"</span><span class="b1">]</span> <span class="o">=</span> <span class="s">"taeho"</span><span class="x">;</span></div>
  <div class="ln" style="top:472px;color:#cccccc">21</div>
  <div class="code" style="top:472px">        <span class="v">document</span><span class="x">.</span><span class="f">write</span><span class="b1">(</span><span class="s">"data scientist : "</span><span class="o">+</span><span class="v">coworkers</span><span class="b2">[</span><span class="s">"data scientist"</span><span class="b2">]</span><span class="o">+</span><span class="s">"&lt;br&gt;"</span><span class="b1">)</span><span class="x">;</span></div>
  <div class="ln" style="top:491px;color:#6e7681">22</div>
  <div class="code" style="top:491px">    <span class="p">&lt;/</span><span class="t">script</span><span class="p">&gt;</span></div>
  <div class="ln" style="top:510px;color:#6e7681">23</div>
  <div class="code" style="top:510px"><span class="p">&lt;/</span><span class="t">body</span><span class="p">&gt;</span></div>
  <div class="ln" style="top:529px;color:#6e7681">24</div>
  <div class="code" style="top:529px"><span class="p">&lt;/</span><span class="t">html</span><span class="p">&gt;</span></div>
</div>
</body></html>
